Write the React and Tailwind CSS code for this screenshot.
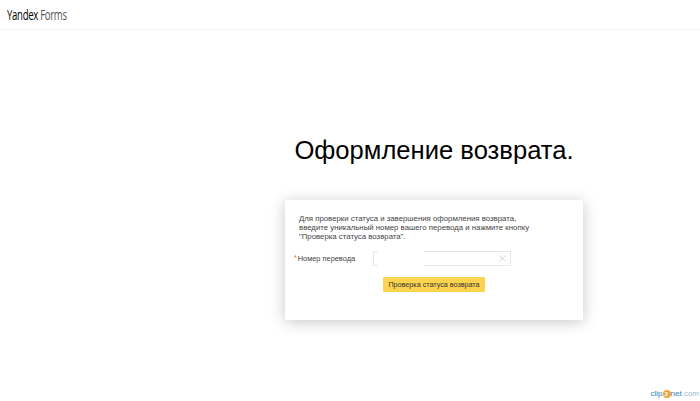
import React from "react";
import { X } from "lucide-react";

const App = () => {
  return (
    <div className="relative h-[401px] w-[700px] overflow-hidden bg-white font-['Liberation_Sans',Arial,sans-serif]">
      <header className="flex h-[30px] items-center border-b border-[#f3f3f3] pl-[7px]">
        <span className="origin-left whitespace-nowrap font-['Open_Sans',sans-serif] text-[15px] font-medium tracking-[-0.5px] text-black [transform:scaleX(0.64)]">
          Yandex <span className="font-normal text-[#555]">Forms</span>
        </span>
      </header>

      <main className="ml-[285px] w-[298px] pt-[103px]">
        <h1 className="whitespace-nowrap text-center text-[25.6px] leading-[34px] text-black">
          Оформление возврата.
        </h1>

        <div className="mt-[33px] h-[120px] w-[298px] bg-white pl-[14px] pt-[14px] shadow-[0_2px_14px_rgba(0,0,0,0.22)]">
          <p className="whitespace-nowrap text-[7.8px] leading-[9px] text-[#444]">
            Для проверки статуса и завершения оформления возврата,
            <br />
            введите уникальный номер вашего перевода и нажмите кнопку
            <br />
            "Проверка статуса возврата".
          </p>

          <div className="-ml-[5px] mt-[10px] flex items-center">
            <label className="w-[79px] whitespace-nowrap text-[7.4px] text-[#444]">
              <span className="mr-[1px] align-top text-[7px] text-[#e0503c]">*</span>Номер перевода
            </label>
            <div className="relative flex h-[15px] w-[138px] items-center justify-end border border-[#e6e6e6] bg-white pr-[2px]">
              <div className="absolute -top-[1px] left-[4px] h-[15px] w-[46px] bg-white" />
              <X size={11} strokeWidth={1} className="text-[#aaa]" />
            </div>
          </div>

          <button className="ml-[84px] mt-[11px] block h-[15px] w-[102px] rounded-[1px] bg-[#fdd44f] text-center text-[7.2px] leading-[15px] text-[#333]">
            Проверка статуса возврата
          </button>
        </div>
      </main>

      <div className="absolute bottom-[2px] right-[1px] flex items-center text-[8px] leading-[10px]">
        <span className="text-[#2f7fc1]">clip</span>
        <span className="flex h-[8px] w-[8px] items-center justify-center rounded-full bg-[#f2a530] text-[6px] font-bold text-white">2</span>
        <span className="text-[#2f7fc1]">net</span>
        <span className="text-[#9db7cc]">.com</span>
      </div>
    </div>
  );
};

export default App;
